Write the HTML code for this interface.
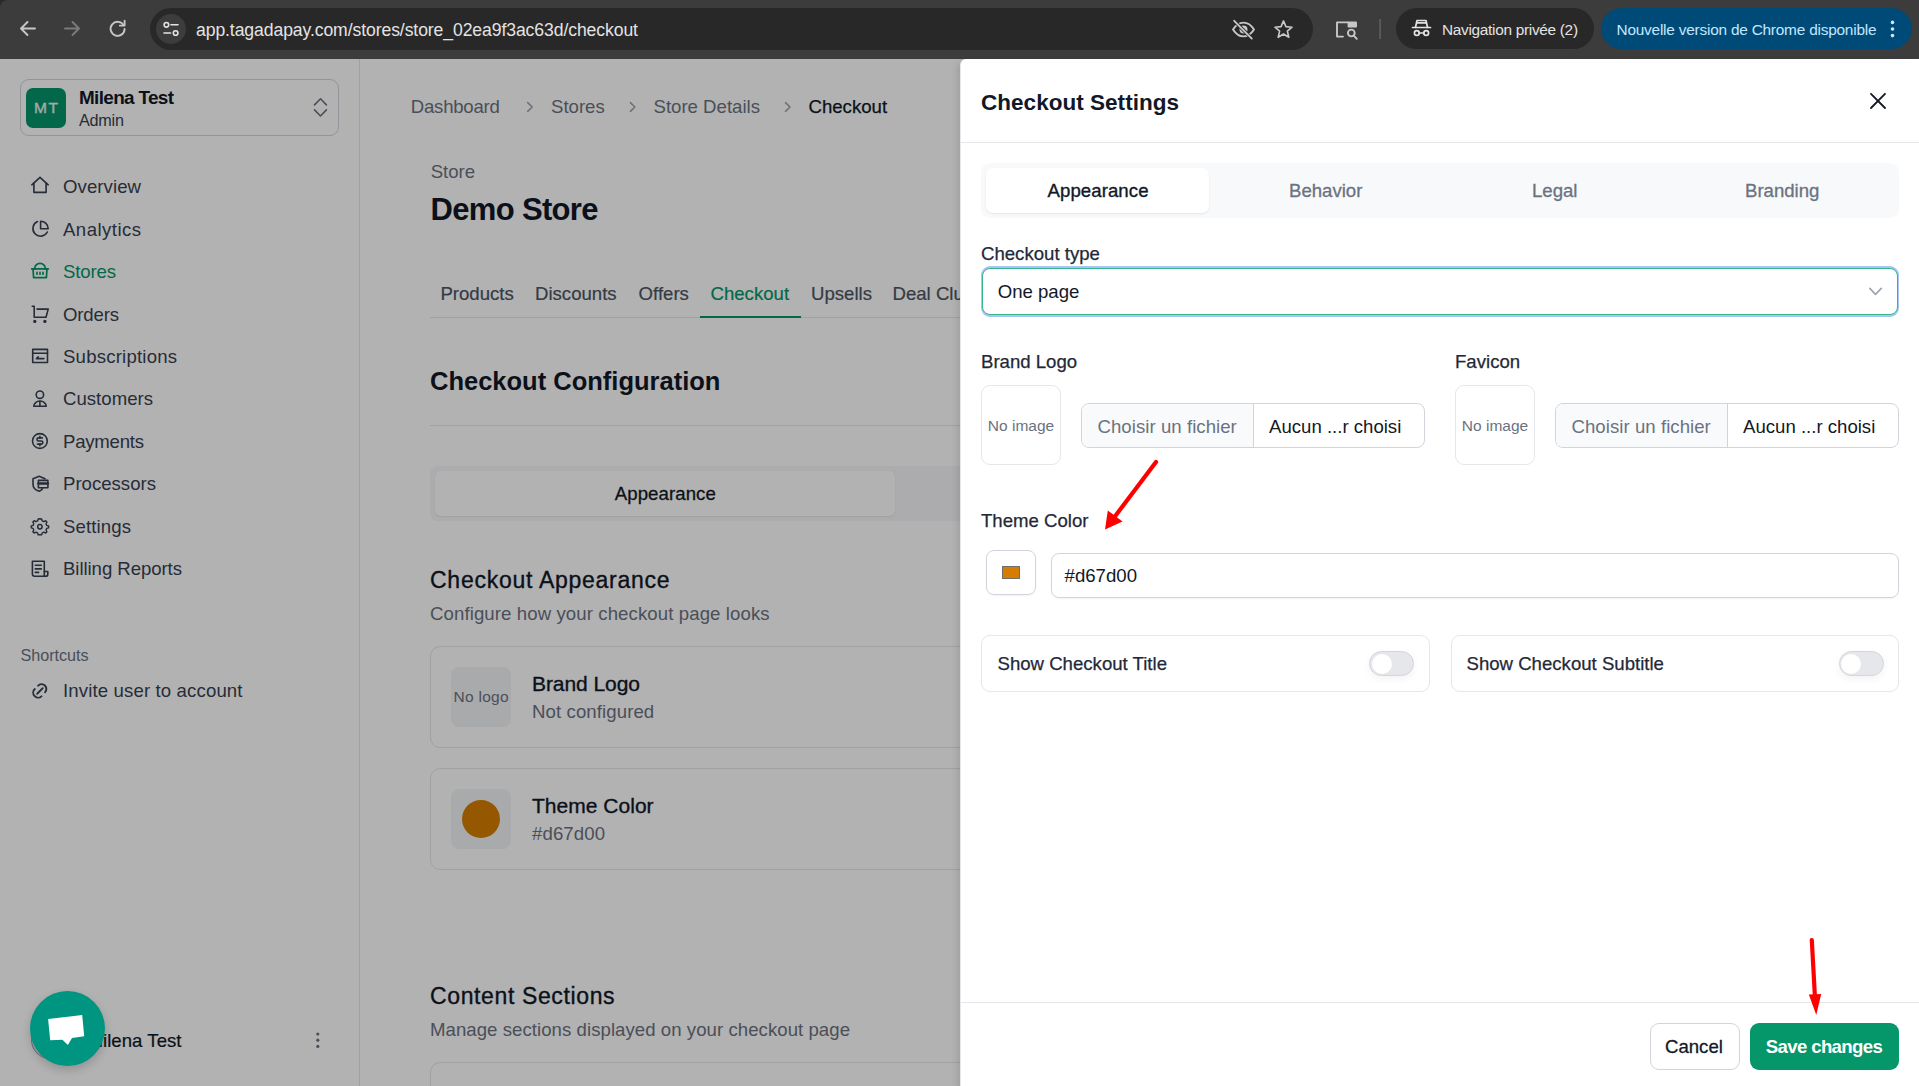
<!DOCTYPE html>
<html><head><meta charset="utf-8">
<style>
*{box-sizing:border-box;margin:0;padding:0}
html,body{width:1919px;height:1086px;overflow:hidden;background:#fff;font-family:"Liberation Sans",sans-serif}
.a{position:absolute;white-space:nowrap}
svg.a{overflow:visible}
</style></head><body>

<div class="a" style="left:0px;top:0px;width:1919px;height:59px;background:#2a2a2a"></div>
<div class="a" style="left:0px;top:0px;width:1919px;height:59px;background:#3c3c3c;border-top-left-radius:8px"></div>
<div class="a" style="left:150px;top:8px;width:1163px;height:42px;border-radius:21px;background:#282828"></div>
<div class="a" style="left:156px;top:14px;width:30px;height:30px;border-radius:15px;background:#3c3c3c"></div>
<div class="a" style="left:196.00px;top:22.10px;font-size:17.6px;line-height:17.6px;color:#e3e3e3;font-weight:normal;letter-spacing:-0.092px;">app.tagadapay.com/stores/store_02ea9f3ac63d/checkout</div>
<div class="a" style="left:1396px;top:8px;width:198px;height:41px;border-radius:21px;background:#282828"></div>
<div class="a" style="left:1442.00px;top:22.46px;font-size:15.4px;line-height:15.4px;color:#e3e3e3;font-weight:normal;letter-spacing:-0.300px;">Navigation privée (2)</div>
<div class="a" style="left:1601px;top:8px;width:311px;height:41px;border-radius:21px;background:#004a77"></div>
<div class="a" style="left:1616.50px;top:22.46px;font-size:15.4px;line-height:15.4px;color:#c2e7ff;font-weight:normal;letter-spacing:-0.216px;">Nouvelle version de Chrome disponible</div>
<svg class="a" style="left:0;top:0" width="1919" height="59" viewBox="0 0 1919 59" fill="none" stroke-linecap="round" stroke-linejoin="round">
<g stroke="#c7c7c7" stroke-width="1.9"><path d="M21 28.5H35M27.5 22L21 28.5L27.5 35"/></g>
<g stroke="#7b7b7b" stroke-width="1.9"><path d="M65 28.5H79M72.5 22L79 28.5L72.5 35"/></g>
<g stroke="#c7c7c7" stroke-width="1.9"><path d="M123.6 25.2A7 7 0 1 0 124.6 29"/><path d="M124.6 20.8V25.6H119.8"/></g>
<g stroke="#e3e3e3" stroke-width="1.6"><circle cx="166.4" cy="24.8" r="2.3"/><path d="M171 24.8H178"/><path d="M164 33H170.5"/><circle cx="175.6" cy="33" r="2.3"/></g>
<g stroke="#c7c7c7" stroke-width="1.9"><path d="M1233 29.5C1236 24.8 1240 22.6 1243.5 22.6C1247 22.6 1251 24.8 1254 29.5C1251 34.2 1247 36.4 1243.5 36.4C1240 36.4 1236 34.2 1233 29.5Z"/></g><circle cx="1243.5" cy="29.5" r="4" fill="#c7c7c7"/><path d="M1234.2 20.8L1251.8 38.6" stroke="#282828" stroke-width="3.4"/><path d="M1234.2 20.8L1251.8 38.6" stroke="#c7c7c7" stroke-width="1.9"/>
<path d="M1283.5 20L1286.2 26.4L1293 27L1287.8 31.4L1289.4 38.2L1283.5 34.5L1277.6 38.2L1279.2 31.4L1274 27L1280.8 26.4Z" stroke="#c7c7c7" stroke-width="1.8" transform="translate(1283.5 29) scale(0.9) translate(-1283.5 -29)"/>
<g stroke="#c7c7c7" stroke-width="1.9"><path d="M1348 22.4H1337V36.6H1343"/><circle cx="1351.3" cy="33" r="3.4"/><path d="M1353.8 35.6L1356.8 38.8"/></g>
<rect x="1347.6" y="21.4" width="9.4" height="6" rx="1" fill="#c7c7c7"/>
<rect x="1379.3" y="19" width="1.6" height="20" fill="#5f5f5f"/>
<g stroke="#e3e3e3" stroke-width="1.7"><path d="M1412.5 27.5H1430.5"/><path d="M1415.5 27.3L1417 20.5H1426L1427.5 27.3"/><path d="M1417 22.8H1426" /><circle cx="1416.8" cy="33" r="2.4"/><circle cx="1426.2" cy="33" r="2.4"/><path d="M1419.2 33H1423.8"/></g>
<g fill="#c2e7ff"><circle cx="1892.5" cy="22.4" r="1.8"/><circle cx="1892.5" cy="29" r="1.8"/><circle cx="1892.5" cy="35.6" r="1.8"/></g>
</svg>
<div class="a" style="left:0px;top:59px;width:1919px;height:1027px;background:#fff"></div>
<div class="a" style="left:359px;top:59px;width:1px;height:1027px;background:#e5e7eb"></div>
<div class="a" style="left:20px;top:79px;width:319px;height:57px;border:1px solid #d1d5db;border-radius:9px"></div>
<div class="a" style="left:26px;top:88px;width:40px;height:40px;background:#059669;border-radius:7px"></div>
<div class="a" style="left:34.00px;top:99.88px;font-size:15.5px;line-height:15.5px;color:#e8f5ef;font-weight:normal;letter-spacing:1.620px;-webkit-text-stroke:0.35px #e8f5ef;">MT</div>
<div class="a" style="left:79.00px;top:88.80px;font-size:18.9px;line-height:18.9px;color:#111827;font-weight:bold;letter-spacing:-0.647px;">Milena Test</div>
<div class="a" style="left:79.00px;top:112.19px;font-size:16.2px;line-height:16.2px;color:#374151;font-weight:normal;letter-spacing:-0.221px;">Admin</div>
<div class="a" style="left:63.00px;top:178.46px;font-size:18.6px;line-height:18.6px;color:#374151;font-weight:normal;letter-spacing:0.073px;">Overview</div>
<div class="a" style="left:63.00px;top:220.86px;font-size:18.6px;line-height:18.6px;color:#374151;font-weight:normal;letter-spacing:0.450px;">Analytics</div>
<div class="a" style="left:63.00px;top:263.26px;font-size:18.6px;line-height:18.6px;color:#059669;font-weight:normal;letter-spacing:-0.148px;">Stores</div>
<div class="a" style="left:63.00px;top:305.66px;font-size:18.6px;line-height:18.6px;color:#374151;font-weight:normal;letter-spacing:-0.165px;">Orders</div>
<div class="a" style="left:63.00px;top:348.06px;font-size:18.6px;line-height:18.6px;color:#374151;font-weight:normal;letter-spacing:0.199px;">Subscriptions</div>
<div class="a" style="left:63.00px;top:390.46px;font-size:18.6px;line-height:18.6px;color:#374151;font-weight:normal;letter-spacing:0.014px;">Customers</div>
<div class="a" style="left:63.00px;top:432.86px;font-size:18.6px;line-height:18.6px;color:#374151;font-weight:normal;letter-spacing:-0.239px;">Payments</div>
<div class="a" style="left:63.00px;top:475.26px;font-size:18.6px;line-height:18.6px;color:#374151;font-weight:normal;letter-spacing:0.000px;">Processors</div>
<div class="a" style="left:63.00px;top:517.66px;font-size:18.6px;line-height:18.6px;color:#374151;font-weight:normal;letter-spacing:0.116px;">Settings</div>
<div class="a" style="left:63.00px;top:560.06px;font-size:18.6px;line-height:18.6px;color:#374151;font-weight:normal;letter-spacing:-0.063px;">Billing Reports</div>
<div class="a" style="left:20.60px;top:647.29px;font-size:16.2px;line-height:16.2px;color:#6b7280;font-weight:normal;letter-spacing:-0.047px;">Shortcuts</div>
<div class="a" style="left:63.00px;top:682.26px;font-size:18.6px;line-height:18.6px;color:#374151;font-weight:normal;letter-spacing:0.131px;">Invite user to account</div>
<div class="a" style="left:31px;top:1021px;width:38px;height:38px;border-radius:50%;background:#e5e7eb;border:1px solid #9ca3af"></div>
<div class="a" style="left:87.50px;top:1032.26px;font-size:18.6px;line-height:18.6px;color:#111827;font-weight:normal;letter-spacing:0.030px;-webkit-text-stroke:0.20px #111827;">Milena Test</div>
<div class="a" style="left:410.80px;top:98.26px;font-size:18.6px;line-height:18.6px;color:#6b7280;font-weight:normal;letter-spacing:-0.245px;">Dashboard</div>
<div class="a" style="left:551.00px;top:98.26px;font-size:18.6px;line-height:18.6px;color:#6b7280;font-weight:normal;letter-spacing:0.000px;">Stores</div>
<div class="a" style="left:653.50px;top:98.26px;font-size:18.6px;line-height:18.6px;color:#6b7280;font-weight:normal;letter-spacing:0.000px;">Store Details</div>
<div class="a" style="left:808.50px;top:98.26px;font-size:18.6px;line-height:18.6px;color:#111827;font-weight:normal;letter-spacing:0.000px;-webkit-text-stroke:0.25px #111827;">Checkout</div>
<div class="a" style="left:430.70px;top:163.06px;font-size:18.6px;line-height:18.6px;color:#6b7280;font-weight:normal;letter-spacing:0.000px;">Store</div>
<div class="a" style="left:430.50px;top:194.46px;font-size:31px;line-height:31px;color:#111827;font-weight:bold;letter-spacing:-0.665px;">Demo Store</div>
<div class="a" style="left:440.40px;top:285.26px;font-size:18.6px;line-height:18.6px;color:#4b5563;font-weight:normal;letter-spacing:0.000px;-webkit-text-stroke:0.20px #4b5563;">Products</div>
<div class="a" style="left:535.00px;top:285.26px;font-size:18.6px;line-height:18.6px;color:#4b5563;font-weight:normal;letter-spacing:0.000px;-webkit-text-stroke:0.20px #4b5563;">Discounts</div>
<div class="a" style="left:638.60px;top:285.26px;font-size:18.6px;line-height:18.6px;color:#4b5563;font-weight:normal;letter-spacing:0.000px;-webkit-text-stroke:0.20px #4b5563;">Offers</div>
<div class="a" style="left:710.50px;top:285.26px;font-size:18.6px;line-height:18.6px;color:#059669;font-weight:normal;letter-spacing:0.000px;-webkit-text-stroke:0.20px #059669;">Checkout</div>
<div class="a" style="left:811.00px;top:285.26px;font-size:18.6px;line-height:18.6px;color:#4b5563;font-weight:normal;letter-spacing:0.000px;-webkit-text-stroke:0.20px #4b5563;">Upsells</div>
<div class="a" style="left:892.50px;top:285.26px;font-size:18.6px;line-height:18.6px;color:#4b5563;font-weight:normal;letter-spacing:0.000px;-webkit-text-stroke:0.20px #4b5563;">Deal Clubs</div>
<div class="a" style="left:430px;top:317px;width:530px;height:1px;background:#e5e7eb"></div>
<div class="a" style="left:700px;top:316px;width:101px;height:2px;background:#059669"></div>
<div class="a" style="left:430.00px;top:369.41px;font-size:25.5px;line-height:25.5px;color:#111827;font-weight:bold;letter-spacing:0.000px;">Checkout Configuration</div>
<div class="a" style="left:430px;top:425px;width:530px;height:1px;background:#e5e7eb"></div>
<div class="a" style="left:430px;top:466px;width:560px;height:55px;background:#f6f7f9;border-radius:8px"></div>
<div class="a" style="left:435px;top:471px;width:460px;height:45px;background:#fff;border-radius:6px;box-shadow:0 1px 2px rgba(0,0,0,.08)"></div>
<div class="a" style="left:614.80px;top:485.26px;font-size:18.6px;line-height:18.6px;color:#111827;font-weight:normal;letter-spacing:0.080px;-webkit-text-stroke:0.30px #111827;">Appearance</div>
<div class="a" style="left:430.00px;top:569.13px;font-size:23px;line-height:23px;color:#111827;font-weight:normal;letter-spacing:0.737px;-webkit-text-stroke:0.35px #111827;">Checkout Appearance</div>
<div class="a" style="left:430.00px;top:605.26px;font-size:18.6px;line-height:18.6px;color:#6b7280;font-weight:normal;letter-spacing:0.099px;">Configure how your checkout page looks</div>
<div class="a" style="left:430px;top:646px;width:560px;height:102px;border:1px solid #e5e7eb;border-radius:10px"></div>
<div class="a" style="left:451px;top:667px;width:60px;height:60px;background:#f3f4f6;border-radius:8px"></div>
<div class="a" style="left:453.60px;top:688.88px;font-size:15.5px;line-height:15.5px;color:#6b7280;font-weight:normal;letter-spacing:0.262px;">No logo</div>
<div class="a" style="left:532.00px;top:673.22px;font-size:21px;line-height:21px;color:#111827;font-weight:normal;letter-spacing:-0.065px;-webkit-text-stroke:0.35px #111827;">Brand Logo</div>
<div class="a" style="left:532.00px;top:703.26px;font-size:18.6px;line-height:18.6px;color:#6b7280;font-weight:normal;letter-spacing:0.097px;">Not configured</div>
<div class="a" style="left:430px;top:768px;width:560px;height:102px;border:1px solid #e5e7eb;border-radius:10px"></div>
<div class="a" style="left:451px;top:789px;width:60px;height:60px;background:#f3f4f6;border-radius:8px"></div>
<div class="a" style="left:462px;top:800px;width:38px;height:38px;background:#d67d00;border-radius:50%"></div>
<div class="a" style="left:532.00px;top:795.22px;font-size:21px;line-height:21px;color:#111827;font-weight:normal;letter-spacing:0.022px;-webkit-text-stroke:0.35px #111827;">Theme Color</div>
<div class="a" style="left:532.00px;top:825.26px;font-size:18.6px;line-height:18.6px;color:#6b7280;font-weight:normal;letter-spacing:0.102px;">#d67d00</div>
<div class="a" style="left:430.00px;top:984.93px;font-size:23px;line-height:23px;color:#111827;font-weight:normal;letter-spacing:0.629px;-webkit-text-stroke:0.35px #111827;">Content Sections</div>
<div class="a" style="left:430.00px;top:1021.26px;font-size:18.6px;line-height:18.6px;color:#6b7280;font-weight:normal;letter-spacing:0.052px;">Manage sections displayed on your checkout page</div>
<div class="a" style="left:430px;top:1062px;width:560px;height:60px;border:1px solid #e5e7eb;border-radius:10px"></div>
<svg class="a" style="left:0;top:0" width="1919" height="1086" viewBox="0 0 1919 1086" fill="none" stroke-linecap="round" stroke-linejoin="round">
<g stroke="#6b7280" stroke-width="1.6"><path d="M314.5 104.9L320.5 98.8L326.4 104.9"/><path d="M314.5 109.9L320.5 116L326.4 109.9"/></g>
<g stroke="#374151" stroke-width="1.6">
<path d="M31.8 184.8L40 177.4L48.2 184.8"/><path d="M33.9 183V192.4H46.1V183"/>
<path d="M47.3 232A7.6 7.6 0 1 1 37.5 221.6"/><path d="M40.6 221.2V228.8H48.2A7.6 7.6 0 0 0 40.6 221.2Z"/>
<path d="M32.2 306.3H34.2V317.3H46L48.2 309.1H37"/><circle cx="34.8" cy="321.4" r="0.9" fill="#374151"/><circle cx="44.9" cy="321.4" r="0.9" fill="#374151"/>
<path d="M32.7 349.4H47.5V362.5H32.7Z"/><path d="M32.7 353.3H47.5"/><path d="M36.4 358.6H43.9M36.4 358.6L38.2 356.9"/>
<circle cx="39.9" cy="394.7" r="3.7"/><path d="M33.8 406.2A6.2 5.2 0 0 1 46.2 406.2Z"/><path d="M39.9 401.2V406"/>
<circle cx="39.9" cy="441" r="7.4"/><path d="M42.3 437.9H38.6A1.6 1.5 0 0 0 38.6 441H41.2A1.6 1.5 0 0 1 41.2 444.1H37.4"/><path d="M39.9 436.3V437.9M39.9 444.1V445.7"/>
<path d="M45 478.8L39.2 476.3L33 478.8V484.5C33 488 36 490.3 39.2 491.3C40.6 490.8 41.8 489.9 42.6 488.4"/><path d="M38.4 480.4H47.9V487.8H38.4Z"/><path d="M38.4 483.5H47.9" stroke-width="2.4"/>
<path d="M32.4 561.2H44.3V576.3H34.6A2.2 2.2 0 0 1 32.4 574.1Z"/><path d="M44.3 571.5H47.8V574.4A2 2 0 0 1 45.8 576.3H44.3"/><path d="M35.3 565.2H41.3M35.3 568.9H41.3M35.3 572.4H38.6"/>
<g transform="translate(39.9 690.9) scale(1.18) translate(-39.9 -690.9)"><path d="M38.4 686.5A3.6 3.6 0 0 1 44.3 692"/><path d="M35.6 689.3A3.6 3.6 0 0 0 41.2 695.5"/><path d="M37.6 693.3L42.3 688.6"/></g>
</g>
<g stroke="#374151" stroke-width="1.5"><path d="M39.9 518.2L41.8 518.4L42.4 520.5L44.2 521.3L46.1 520.2L47.5 521.6L46.5 523.5L47.2 525.3L49.3 525.9V527.9L47.2 528.5L46.5 530.3L47.5 532.2L46.1 533.6L44.2 532.5L42.4 533.3L41.8 535.4H39.9H38L37.4 533.3L35.6 532.5L33.7 533.6L32.3 532.2L33.3 530.3L32.6 528.5L30.6 527.9V525.9L32.6 525.3L33.3 523.5L32.3 521.6L33.7 520.2L35.6 521.3L37.4 520.5L38 518.4Z" transform="translate(39.9 526.8) scale(0.93) translate(-39.9 -526.8)"/><circle cx="39.9" cy="526.8" r="2.2"/></g>
<g stroke="#059669" stroke-width="1.7"><path d="M34.6 268.9A5.4 5.6 0 0 1 45.4 268.9"/><path d="M31.7 268.9H48.3M33 268.9L33.6 277.6H46.4L47 268.9"/><path d="M37 272.4V274.2M40 272.4V274.2M43 272.4V274.2"/></g>
<g stroke="#9ca3af" stroke-width="1.6"><path d="M527.7 102.7L532.2 107L527.7 111.3"/><path d="M630.4 102.7L634.9 107L630.4 111.3"/><path d="M785.5 102.7L790 107L785.5 111.3"/></g>
<g fill="#6b7280"><circle cx="317.8" cy="1034" r="1.6"/><circle cx="317.8" cy="1040.2" r="1.6"/><circle cx="317.8" cy="1046.4" r="1.6"/></g>
</svg>
<div class="a" style="left:0px;top:59px;width:1919px;height:1027px;background:rgba(0,0,0,0.3)"></div>
<div class="a" style="left:960px;top:59px;width:959px;height:1027px;background:#fff;border-top-left-radius:6px;border-left:1px solid #e5e7eb;box-shadow:-3px 3px 6px rgba(0,0,0,.10)"></div>
<div class="a" style="left:981.00px;top:92.45px;font-size:22.5px;line-height:22.5px;color:#111827;font-weight:bold;letter-spacing:0.030px;">Checkout Settings</div>
<div class="a" style="left:960px;top:142px;width:959px;height:1px;background:#e5e7eb"></div>
<div class="a" style="left:981px;top:163px;width:918px;height:55px;background:#f8f9fb;border-radius:9px"></div>
<div class="a" style="left:986px;top:168px;width:223px;height:45px;background:#fff;border-radius:7px;box-shadow:0 1px 2px rgba(0,0,0,.08)"></div>
<div class="a" style="left:1047.50px;top:182.26px;font-size:18.6px;line-height:18.6px;color:#111827;font-weight:normal;letter-spacing:0.080px;-webkit-text-stroke:0.35px #111827;">Appearance</div>
<div class="a" style="left:1289.00px;top:182.26px;font-size:18.6px;line-height:18.6px;color:#6b7280;font-weight:normal;letter-spacing:0.000px;-webkit-text-stroke:0.30px #6b7280;">Behavior</div>
<div class="a" style="left:1532.00px;top:182.26px;font-size:18.6px;line-height:18.6px;color:#6b7280;font-weight:normal;letter-spacing:0.000px;-webkit-text-stroke:0.30px #6b7280;">Legal</div>
<div class="a" style="left:1745.00px;top:182.26px;font-size:18.6px;line-height:18.6px;color:#6b7280;font-weight:normal;letter-spacing:0.000px;-webkit-text-stroke:0.30px #6b7280;">Branding</div>
<div class="a" style="left:981.00px;top:245.26px;font-size:18.6px;line-height:18.6px;color:#1f2937;font-weight:normal;letter-spacing:0.000px;-webkit-text-stroke:0.25px #1f2937;">Checkout type</div>
<div class="a" style="left:981px;top:266px;width:918px;height:51px;border-radius:9px;background:#a9c5f5"></div>
<div class="a" style="left:982px;top:268px;width:916px;height:47px;border:1px solid #34b68a;border-radius:8px;background:#fff"></div>
<div class="a" style="left:997.70px;top:283.16px;font-size:18.6px;line-height:18.6px;color:#111827;font-weight:normal;letter-spacing:0.000px;">One page</div>
<div class="a" style="left:981.00px;top:352.66px;font-size:18.6px;line-height:18.6px;color:#1f2937;font-weight:normal;letter-spacing:0.000px;-webkit-text-stroke:0.25px #1f2937;">Brand Logo</div>
<div class="a" style="left:1455.00px;top:352.66px;font-size:18.6px;line-height:18.6px;color:#1f2937;font-weight:normal;letter-spacing:0.000px;-webkit-text-stroke:0.25px #1f2937;">Favicon</div>
<div class="a" style="left:981px;top:385px;width:80px;height:80px;border:1px solid #e5e7eb;border-radius:9px"></div>
<div class="a" style="left:987.80px;top:417.88px;font-size:15.5px;line-height:15.5px;color:#6b7280;font-weight:normal;letter-spacing:0.009px;">No image</div>
<div class="a" style="left:1081px;top:403px;width:344px;height:45px;border:1px solid #d1d5db;border-radius:8px;overflow:hidden"></div>
<div class="a" style="left:1082px;top:404px;width:172px;height:43px;background:#f9fafb;border-right:1px solid #d1d5db;border-radius:7px 0 0 7px"></div>
<div class="a" style="left:1097.50px;top:418.26px;font-size:18.6px;line-height:18.6px;color:#6b7280;font-weight:normal;letter-spacing:0.049px;">Choisir un fichier</div>
<div class="a" style="left:1269.00px;top:418.26px;font-size:18.6px;line-height:18.6px;color:#111827;font-weight:normal;letter-spacing:0.000px;">Aucun ...r choisi</div>
<div class="a" style="left:1455px;top:385px;width:80px;height:80px;border:1px solid #e5e7eb;border-radius:9px"></div>
<div class="a" style="left:1461.80px;top:417.88px;font-size:15.5px;line-height:15.5px;color:#6b7280;font-weight:normal;letter-spacing:0.009px;">No image</div>
<div class="a" style="left:1555px;top:403px;width:344px;height:45px;border:1px solid #d1d5db;border-radius:8px;overflow:hidden"></div>
<div class="a" style="left:1556px;top:404px;width:172px;height:43px;background:#f9fafb;border-right:1px solid #d1d5db;border-radius:7px 0 0 7px"></div>
<div class="a" style="left:1571.50px;top:418.26px;font-size:18.6px;line-height:18.6px;color:#6b7280;font-weight:normal;letter-spacing:0.049px;">Choisir un fichier</div>
<div class="a" style="left:1743.00px;top:418.26px;font-size:18.6px;line-height:18.6px;color:#111827;font-weight:normal;letter-spacing:0.000px;">Aucun ...r choisi</div>
<div class="a" style="left:981.00px;top:512.26px;font-size:18.6px;line-height:18.6px;color:#1f2937;font-weight:normal;letter-spacing:0.000px;-webkit-text-stroke:0.25px #1f2937;">Theme Color</div>
<div class="a" style="left:986px;top:550px;width:50px;height:45px;border:1px solid #d1d5db;border-radius:8px;box-shadow:0 1px 2px rgba(0,0,0,.05)"></div>
<div class="a" style="left:1002px;top:566px;width:18px;height:13px;background:#d67d00;border:1px solid #6e6e6e"></div>
<div class="a" style="left:1051px;top:553px;width:848px;height:45px;border:1px solid #d1d5db;border-radius:8px;box-shadow:0 1px 2px rgba(0,0,0,.05)"></div>
<div class="a" style="left:1064.60px;top:567.26px;font-size:18.6px;line-height:18.6px;color:#111827;font-weight:normal;letter-spacing:0.000px;">#d67d00</div>
<div class="a" style="left:981px;top:635px;width:449px;height:57px;border:1px solid #e5e7eb;border-radius:9px"></div>
<div class="a" style="left:997.50px;top:655.26px;font-size:18.6px;line-height:18.6px;color:#1f2937;font-weight:normal;letter-spacing:0.000px;-webkit-text-stroke:0.25px #1f2937;">Show Checkout Title</div>
<div class="a" style="left:1369px;top:651px;width:45px;height:25px;background:#e5e7eb;border:1.5px solid #d4d6db;border-radius:13px;box-shadow:0 3px 8px rgba(0,0,0,.05)"></div>
<div class="a" style="left:1371.7px;top:653.8px;width:20.3px;height:20.3px;background:#fff;border-radius:50%"></div>
<div class="a" style="left:1451px;top:635px;width:448px;height:57px;border:1px solid #e5e7eb;border-radius:9px"></div>
<div class="a" style="left:1466.50px;top:655.26px;font-size:18.6px;line-height:18.6px;color:#1f2937;font-weight:normal;letter-spacing:0.000px;-webkit-text-stroke:0.25px #1f2937;">Show Checkout Subtitle</div>
<div class="a" style="left:1838.5px;top:651px;width:45px;height:25px;background:#e5e7eb;border:1.5px solid #d4d6db;border-radius:13px;box-shadow:0 3px 8px rgba(0,0,0,.05)"></div>
<div class="a" style="left:1841.2px;top:653.8px;width:20.3px;height:20.3px;background:#fff;border-radius:50%"></div>
<div class="a" style="left:960px;top:1002px;width:959px;height:1px;background:#e5e7eb"></div>
<div class="a" style="left:1650px;top:1023px;width:90px;height:47px;border:1px solid #d1d5db;border-radius:9px;background:#fff"></div>
<div class="a" style="left:1665.00px;top:1038.26px;font-size:18.6px;line-height:18.6px;color:#111827;font-weight:normal;letter-spacing:0.000px;-webkit-text-stroke:0.30px #111827;">Cancel</div>
<div class="a" style="left:1750px;top:1023px;width:149px;height:47px;background:#059669;border-radius:9px"></div>
<div class="a" style="left:1765.80px;top:1038.26px;font-size:18.6px;line-height:18.6px;color:#fff;font-weight:bold;letter-spacing:-0.639px;">Save changes</div>
<svg class="a" style="left:0;top:0" width="1919" height="1086" viewBox="0 0 1919 1086" fill="none" stroke-linecap="round" stroke-linejoin="round">
<g stroke="#111827" stroke-width="1.8"><path d="M1871 93.8L1885 108M1885 93.8L1871 108"/></g>
<g stroke="#9ca3af" stroke-width="1.6"><path d="M1869.8 288.4L1875.5 294.4L1881.3 288.4"/></g>
<g stroke="#ff0000" stroke-width="4.2"><path d="M1156 462L1113 519"/><path d="M1811.8 940L1815 998"/></g>
<path d="M1105 529.5L1107.8 510.5L1122.5 521.5Z" fill="#ff0000"/>
<path d="M1816.3 1015L1808.8 994.5L1821.2 994Z" fill="#ff0000"/>
</svg>
<div class="a" style="left:30px;top:991px;width:75px;height:75px;border-radius:50%;background:#009580;box-shadow:0 4px 10px rgba(0,0,0,.18)"></div>
<svg class="a" style="left:0;top:0" width="200" height="1086" viewBox="0 0 200 1086"><path d="M48.1 1019.1L82.2 1015L84.2 1036.2L72 1038L67.9 1044.9L62.4 1039.7L50.2 1040.3Z" fill="#fff"/></svg>
</body></html>
